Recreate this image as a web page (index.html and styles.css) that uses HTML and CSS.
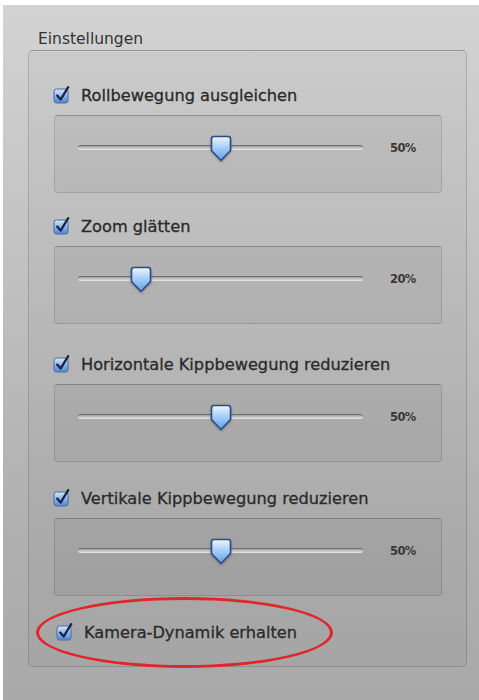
FILE: index.html
```html
<!DOCTYPE html>
<html lang="de">
<head>
<meta charset="utf-8">
<title>Einstellungen</title>
<link rel="stylesheet" href="styles.css">
</head>
<body>
<svg class="defs" width="0" height="0" aria-hidden="true">
  <defs>
    <linearGradient id="cbg" x1="0" y1="0" x2="0" y2="1">
      <stop offset="0" stop-color="#d6e6fb"/>
      <stop offset="0.5" stop-color="#8db5e8"/>
      <stop offset="1" stop-color="#4f86d2"/>
    </linearGradient>
    <linearGradient id="thg" x1="0" y1="0" x2="0" y2="1">
      <stop offset="0" stop-color="#eef6ff"/>
      <stop offset="0.45" stop-color="#a9d0f7"/>
      <stop offset="1" stop-color="#5c9ee8"/>
    </linearGradient>
    <symbol id="check" viewBox="0 0 18 18">
      <rect x="1" y="3" width="14" height="14" rx="2.5" fill="url(#cbg)" stroke="#4a6b9c" stroke-width="1"/>
      <path d="M4.2 9.6 L7.6 13.6 L15.2 1.2" fill="none" stroke="#18244a" stroke-width="2.3" stroke-linecap="round" stroke-linejoin="round"/>
    </symbol>
    <symbol id="thumb" viewBox="0 0 22 27">
      <path d="M4 1.5 H18 Q20.5 1.5 20.5 4 V15.5 L11 25.5 L1.5 15.5 V4 Q1.5 1.5 4 1.5 Z" fill="url(#thg)" stroke="#2c4c85" stroke-width="1.6" stroke-linejoin="round"/>
    </symbol>
  </defs>
</svg>
<div class="window">
  <div class="title">Einstellungen</div>
  <div class="group">
    <div class="section">
      <div class="row"><svg class="cb" width="18" height="18"><use href="#check"/></svg><span class="label">Rollbewegung ausgleichen</span></div>
      <div class="panel">
        <div class="slider">
          <div class="track"><svg class="thumb" width="22" height="27" style="left: calc(50% - 11px)"><use href="#thumb"/></svg></div>
          <span class="value">50%</span>
        </div>
      </div>
    </div>
    <div class="section">
      <div class="row"><svg class="cb" width="18" height="18"><use href="#check"/></svg><span class="label">Zoom glätten</span></div>
      <div class="panel">
        <div class="slider">
          <div class="track"><svg class="thumb" width="22" height="27" style="left: calc(22% - 11px)"><use href="#thumb"/></svg></div>
          <span class="value">20%</span>
        </div>
      </div>
    </div>
    <div class="section">
      <div class="row"><svg class="cb" width="18" height="18"><use href="#check"/></svg><span class="label">Horizontale Kippbewegung reduzieren</span></div>
      <div class="panel">
        <div class="slider">
          <div class="track"><svg class="thumb" width="22" height="27" style="left: calc(50% - 11px)"><use href="#thumb"/></svg></div>
          <span class="value">50%</span>
        </div>
      </div>
    </div>
    <div class="section">
      <div class="row"><svg class="cb" width="18" height="18"><use href="#check"/></svg><span class="label">Vertikale Kippbewegung reduzieren</span></div>
      <div class="panel">
        <div class="slider">
          <div class="track"><svg class="thumb" width="22" height="27" style="left: calc(50% - 11px)"><use href="#thumb"/></svg></div>
          <span class="value">50%</span>
        </div>
      </div>
    </div>
    <div class="section last">
      <div class="row"><svg class="cb" width="18" height="18"><use href="#check"/></svg><span class="label">Kamera-Dynamik erhalten</span></div>
    </div>
  </div>
  <div class="highlight"></div>
</div>
</body>
</html>
```
FILE: styles.css
```css
html, body {
  margin: 0;
  padding: 0;
  background: #ffffff;
}

.defs {
  display: block;
  width: 0;
  height: 0;
  overflow: hidden;
}

.window {
  position: relative;
  margin: 5px 0 0 3px;
  height: 695px;
  background: linear-gradient(#d3d3d3 0%, #c2c2c2 35%, #b0b0b0 75%, #a9a9a9 100%);
  font-family: "DejaVu Sans", Verdana, sans-serif;
  color: #2c2c2c;
  overflow: hidden;
}

.title {
  padding: 25px 0 0 35px;
  font-size: 15.5px;
  line-height: 18px;
  color: #333;
}

.group {
  box-sizing: border-box;
  margin: 2px 0 0 25px;
  width: 439px;
  height: 617px;
  padding: 34px 24px 0 24px;
  border: 1px solid rgba(0, 0, 0, 0.14);
  border-top-color: rgba(0, 0, 0, 0.26);
  border-radius: 5px;
  background: rgba(0, 0, 0, 0.025);
  box-shadow: inset 0 1px 0 rgba(255, 255, 255, 0.15);
}

.section {
  display: flex;
  flex-direction: column;
}

.row {
  display: flex;
  align-items: center;
  gap: 10px;
  height: 22px;
}

.cb {
  display: block;
  flex: none;
  margin-top: -2px;
}

.label {
  font-size: 16.2px;
  line-height: 20px;
  color: #2a2a2a;
  white-space: nowrap;
  -webkit-text-stroke: 0.3px #2a2a2a;
}

.panel {
  box-sizing: border-box;
  margin: 8px 0 26px 1px;
  height: 78px;
  padding: 24px 0 0 23px;
  border: 1px solid rgba(0, 0, 0, 0.12);
  border-top-color: rgba(0, 0, 0, 0.24);
  border-radius: 4px;
  background: rgba(0, 0, 0, 0.045);
}

.section:nth-child(2) .panel {
  margin-bottom: 30px;
}

.section:nth-child(1) .panel {
  margin-bottom: 23px;
}

.slider {
  display: flex;
  align-items: center;
  height: 14px;
}

.track {
  position: relative;
  width: 285px;
  height: 3px;
  border-top: 1px solid #6e6e6e;
  border-bottom: 1px solid #e2e2e2;
  border-radius: 3px;
  background: linear-gradient(#a0a0a0, #d6d6d6);
}

.thumb {
  position: absolute;
  top: -11px;
  display: block;
  filter: drop-shadow(0 1px 1px rgba(0, 0, 0, 0.3));
}

.value {
  margin: 2px 0 0 27px;
  font-size: 11.5px;
  font-weight: bold;
  letter-spacing: -0.6px;
  color: #383838;
}

.last .row {
  margin-left: 3px;
}

.highlight {
  position: absolute;
  left: 33px;
  top: 592px;
  width: 297px;
  height: 71px;
  box-sizing: border-box;
  border: 3px solid #e0262a;
  border-radius: 50%;
  pointer-events: none;
}
```
